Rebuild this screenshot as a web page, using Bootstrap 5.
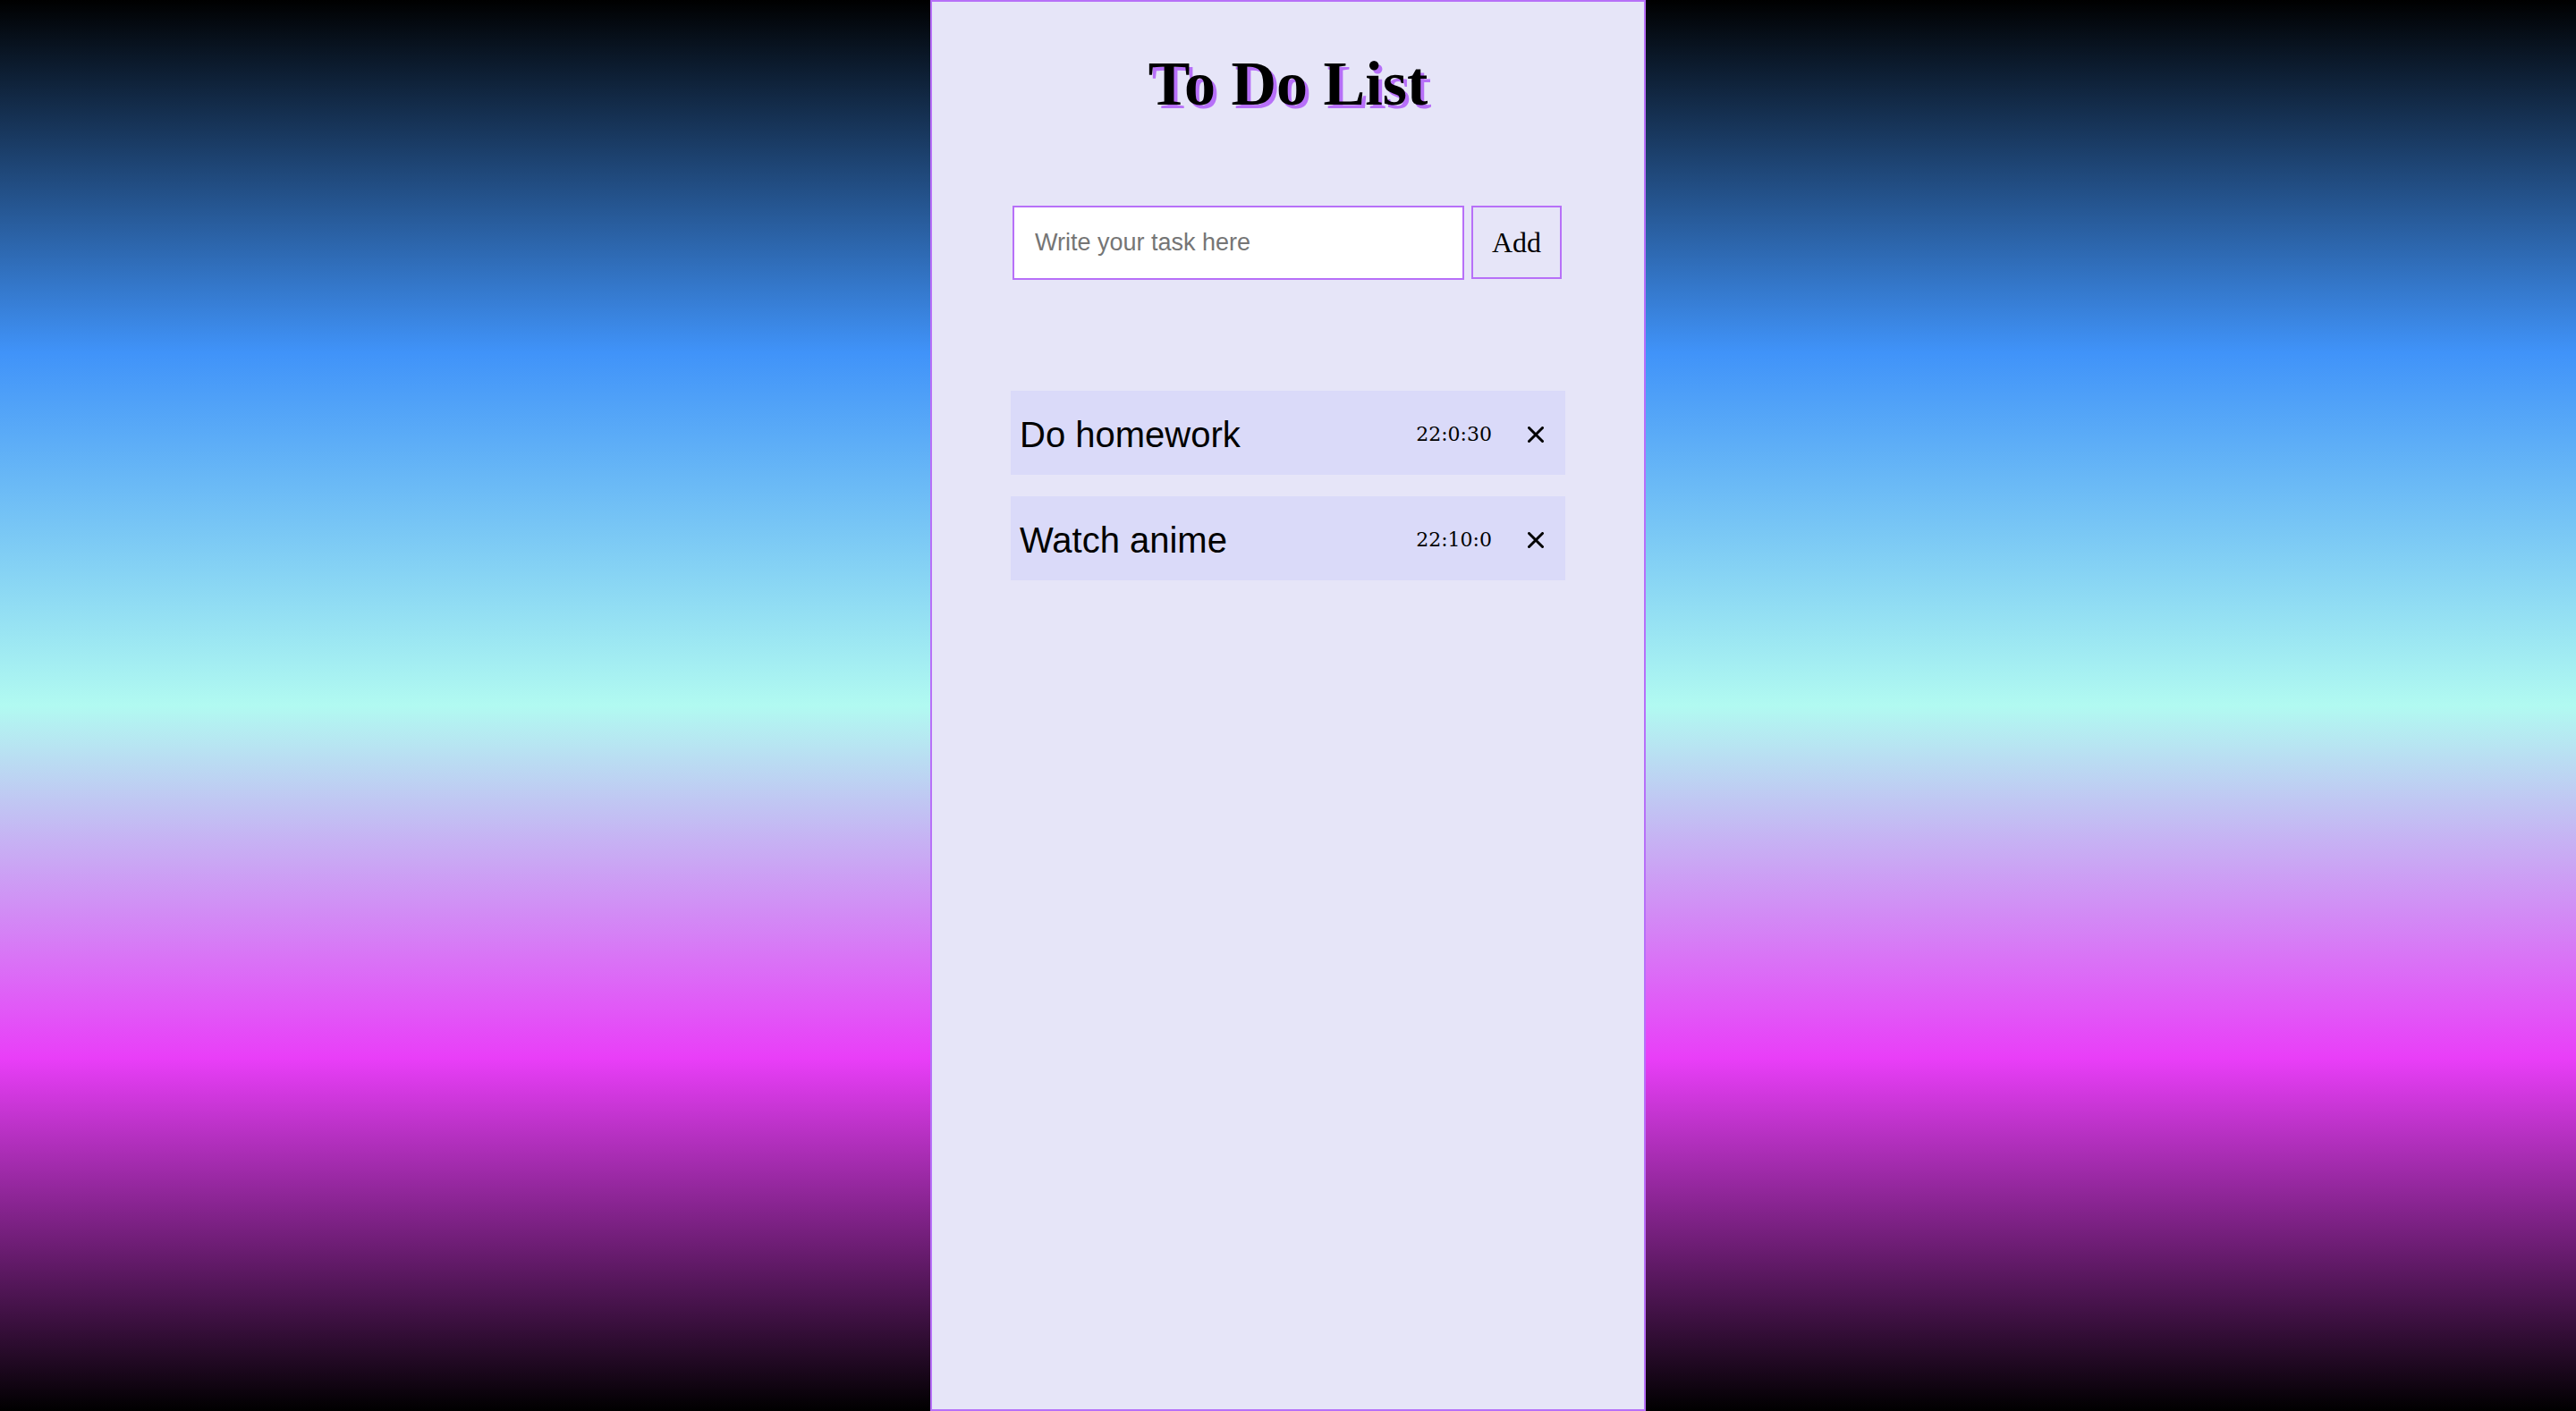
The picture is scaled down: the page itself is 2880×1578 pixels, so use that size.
<!DOCTYPE html>
<html lang="en">
<head>
<meta charset="utf-8">
<meta name="viewport" content="width=device-width, initial-scale=1">
<title>To Do List</title>
<link href="https://cdn.jsdelivr.net/npm/bootstrap@5.3.0/dist/css/bootstrap.min.css" rel="stylesheet">
<style>
  :root { --accent: #b770f8; --panel: #e6e5f8; --task: #dadaf9; }
  body {
    background: linear-gradient(#000, #4093f9, #b1faf1, #e93ef8, #000);
    font-family: "Liberation Sans", Arial, sans-serif;
    color: #000;
  }
  .todo-panel {
    width: 100%;
    max-width: 800px;
    padding: 52px 88px;
    background: var(--panel);
    border: 2px solid var(--accent);
  }
  .todo-title {
    font: bold 70px/80px Georgia, "Liberation Serif", serif;
    text-shadow: 4px 4px 0 var(--accent);
    margin-bottom: 96px;
  }
  .todo-form { gap: 8px; padding: 0 4px 0 2px; margin-bottom: 124px; }
  .todo-input {
    height: 83px;
    padding: 0 23px;
    border: 2px solid var(--accent);
    font-size: 27px;
    color: #000;
  }
  .todo-input::placeholder { color: #757575; opacity: 1; }
  .todo-add {
    height: 82px;
    padding: 0 21px;
    border: 2px solid var(--accent);
    font: 32px/40px "Liberation Serif", "Times New Roman", serif;
    color: #000;
  }
  .todo-list { gap: 24px; }
  .todo-task { height: 94px; padding: 4px 10px 0; background: var(--task); font-size: 40px; }
  .todo-time { font: 22px/32px Georgia, "DejaVu Serif", serif; }
  .todo-remove { width: 46px; height: 46px; margin-left: 26px; }
</style>
<script src="https://cdn.jsdelivr.net/npm/bootstrap@5.3.0/dist/js/bootstrap.bundle.min.js" defer></script>
</head>
<body class="min-vh-100 d-flex justify-content-center">
<main class="todo-panel">
  <h1 class="todo-title text-center">To Do List</h1>
  <form class="todo-form d-flex align-items-start">
    <input type="text" class="todo-input form-control rounded-0 flex-fill" placeholder="Write your task here" aria-label="Write your task here">
    <button type="button" class="todo-add btn rounded-0">Add</button>
  </form>
  <ul class="todo-list list-unstyled d-flex flex-column mb-0">
    <li class="todo-task d-flex align-items-center">
      <span class="me-auto">Do homework</span>
      <time class="todo-time">22:0:30</time>
      <button type="button" class="todo-remove btn p-0 d-flex align-items-center justify-content-center" aria-label="Remove Do homework">
        <svg width="18" height="18" viewBox="0 0 18 18" fill="none" stroke="#000" stroke-width="3" stroke-linecap="round"><path d="M1.5 1.5l15 15M16.5 1.5l-15 15"/></svg>
      </button>
    </li>
    <li class="todo-task d-flex align-items-center">
      <span class="me-auto">Watch anime</span>
      <time class="todo-time">22:10:0</time>
      <button type="button" class="todo-remove btn p-0 d-flex align-items-center justify-content-center" aria-label="Remove Watch anime">
        <svg width="18" height="18" viewBox="0 0 18 18" fill="none" stroke="#000" stroke-width="3" stroke-linecap="round"><path d="M1.5 1.5l15 15M16.5 1.5l-15 15"/></svg>
      </button>
    </li>
  </ul>
</main>
</body>
</html>
